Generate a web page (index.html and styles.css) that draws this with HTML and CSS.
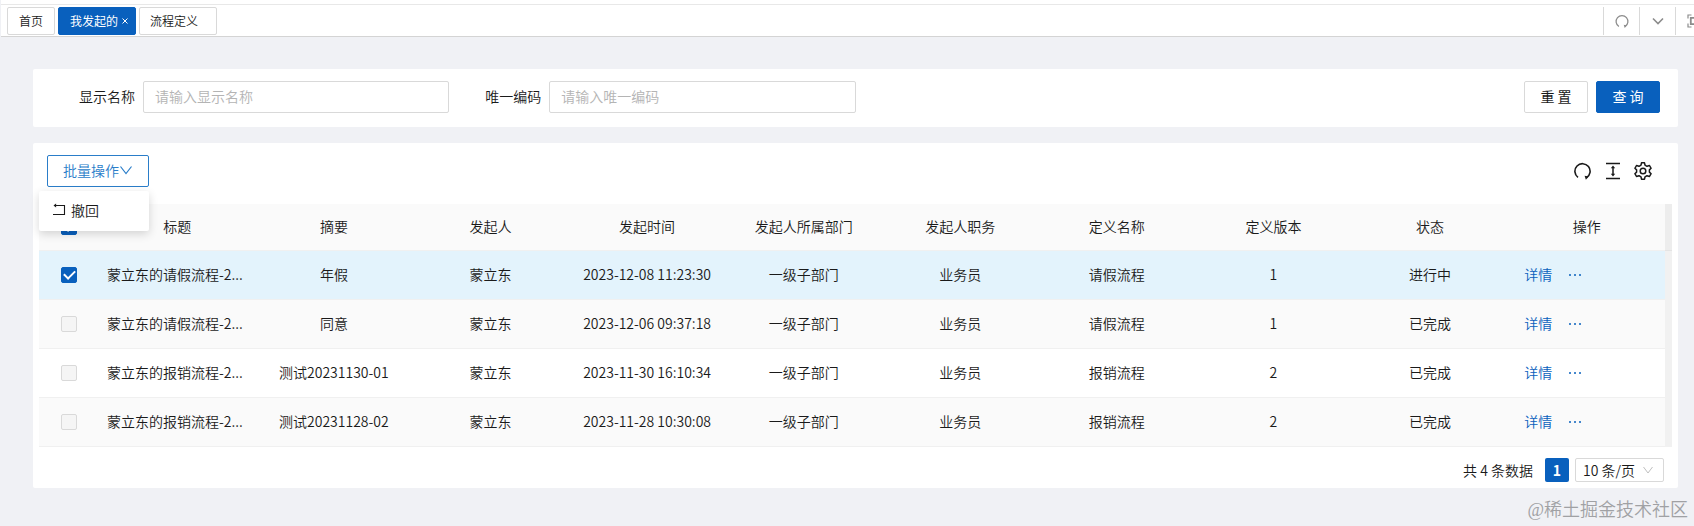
FILE: index.html
```html
<!DOCTYPE html>
<html lang="zh-CN">
<head>
    <meta charset="UTF-8">
    <meta name="viewport" content="width=device-width, initial-scale=1.0">
    <title>我发起的</title>
    <link rel="stylesheet" href="styles.css">
</head>
<body>
    <!-- Page tabs -->
    <header class="tabs-bar">
        <nav class="tabs">
            <a class="tab" href="#">首页</a>
            <div class="tab active">
                <a href="#">我发起的</a>
                <button class="tab-close" type="button" aria-label="关闭">
                    <svg width="6" height="6" viewBox="0 0 6 6" fill="none" stroke="currentColor"><path d="M.5.5l5 5M5.5.5l-5 5"/></svg>
                </button>
            </div>
            <a class="tab tab-wide" href="#">流程定义</a>
        </nav>
        <div class="tab-tools">
            <button type="button" aria-label="刷新">
                <svg width="14" height="14" viewBox="0 0 18 18" fill="none" stroke="currentColor" stroke-width="1.6"><path d="M5 16A7.600 7.600 0 1 1 13 16"/><path d="M11.200 13.900l4 .8-2.700 3.300z" fill="currentColor" stroke="none"/></svg>
            </button>
            <button type="button" aria-label="更多">
                <svg width="12" height="12" viewBox="0 0 12 12" fill="none" stroke="currentColor" stroke-width="1.6"><path d="M1 3.500l5 5 5-5"/></svg>
            </button>
            <button type="button" aria-label="全屏">
                <svg width="14" height="14" viewBox="0 0 14 14" fill="none" stroke="currentColor" stroke-width="1.2"><path d="M1 4.500V1h3.500M9.500 1H13v3.500M13 9.500V13H9.500M4.500 13H1V9.500"/><path d="M3.800 3.800h6.400v6.400H3.800z" stroke-width="1.800"/></svg>
            </button>
        </div>
    </header>

    <main class="content">
        <form class="card search-form">
            <div class="form-item">
                <label for="displayName">显示名称</label>
                <input type="text" id="displayName" placeholder="请输入显示名称">
            </div>
            <div class="form-item">
                <label for="uniqueCode">唯一编码</label>
                <input type="text" id="uniqueCode" placeholder="请输入唯一编码">
            </div>
            <div class="form-actions">
                <button class="btn" type="reset">重 置</button>
                <button class="btn btn-primary" type="button">查 询</button>
            </div>
        </form>

        <section class="card table-card">
            <div class="toolbar">
                <div class="dropdown">
                    <button class="btn btn-outline" type="button">批量操作<svg width="14" height="14" viewBox="0 0 14 14" fill="none" stroke="currentColor" stroke-width="1.2"><path d="M1.500 3.500L7 10.500l5.500-7"/></svg></button>
                    <div class="dropdown-menu">
                        <button type="button">
                            <svg width="14" height="14" viewBox="0 0 14 14" fill="none" stroke="currentColor" stroke-width="1.1"><path d="M2 2.500h9.500v9H0"/><path d="M.5 2.500l2.600-1.900v3.800z" fill="currentColor" stroke="none"/></svg>
                            撤回
                        </button>
                    </div>
                </div>
                <div class="table-tools">
                    <button type="button" aria-label="刷新">
                        <svg width="18" height="18" viewBox="0 0 18 18" fill="none" stroke="currentColor" stroke-width="1.6"><path d="M4 15.400A7.600 7.600 0 1 1 12.400 15.800"/><path d="M10.600 13.700l4 .8-2.700 3.300z" fill="currentColor" stroke="none"/></svg>
                    </button>
                    <button type="button" aria-label="密度">
                        <svg width="18" height="18" viewBox="0 0 18 18" fill="none" stroke="currentColor" stroke-width="1.5"><path d="M2 1.500h14M2 16.500h14M9 5v8"/><path d="M9 3.400l2.200 2.900H6.800zM9 14.600l2.200-2.900H6.800z" fill="currentColor" stroke="none"/></svg>
                    </button>
                    <button type="button" aria-label="列设置">
                        <svg width="18" height="18" viewBox="0 0 18 18" fill="none" stroke="currentColor" stroke-width="1.5" stroke-linejoin="round"><path d="M7.500.8h3l.5 2.300 2 1.200 2.500-.8 1.600 2.800-1.700 1.600v2.200l1.700 1.600-1.600 2.800-2.500-.8-2 1.200-.5 2.300h-3L7 14.900l-2-1.200-2.500.8L.9 11.700l1.700-1.600V7.900L.9 6.300l1.600-2.800 2.500.8 2-1.200z"/><circle cx="9" cy="9" r="2.800"/></svg>
                    </button>
                </div>
            </div>

            <table class="data-table">
                <thead>
                    <tr>
                        <th class="col-check"><input type="checkbox" aria-label="全选" checked></th>
                        <th>标题</th>
                        <th>摘要</th>
                        <th>发起人</th>
                        <th>发起时间</th>
                        <th>发起人所属部门</th>
                        <th>发起人职务</th>
                        <th>定义名称</th>
                        <th>定义版本</th>
                        <th>状态</th>
                        <th>操作</th>
                        <th class="col-scroll"></th>
                    </tr>
                </thead>
                <tbody>
                    <tr class="selected">
                        <td><input type="checkbox" aria-label="选择第1行" checked></td>
                        <td class="title">蒙立东的请假流程-2...</td>
                        <td>年假</td>
                        <td>蒙立东</td>
                        <td>2023-12-08 11:23:30</td>
                        <td>一级子部门</td>
                        <td>业务员</td>
                        <td>请假流程</td>
                        <td>1</td>
                        <td>进行中</td>
                        <td class="actions"><a href="#">详情</a><button type="button" aria-label="更多操作"><svg width="14" height="14" viewBox="0 0 14 14" fill="currentColor"><circle cx="2" cy="7" r="1"/><circle cx="7" cy="7" r="1"/><circle cx="12" cy="7" r="1"/></svg></button></td>
                        <td class="col-scroll"></td>
                    </tr>
                    <tr>
                        <td><input type="checkbox" aria-label="选择第2行" disabled></td>
                        <td class="title">蒙立东的请假流程-2...</td>
                        <td>同意</td>
                        <td>蒙立东</td>
                        <td>2023-12-06 09:37:18</td>
                        <td>一级子部门</td>
                        <td>业务员</td>
                        <td>请假流程</td>
                        <td>1</td>
                        <td>已完成</td>
                        <td class="actions"><a href="#">详情</a><button type="button" aria-label="更多操作"><svg width="14" height="14" viewBox="0 0 14 14" fill="currentColor"><circle cx="2" cy="7" r="1"/><circle cx="7" cy="7" r="1"/><circle cx="12" cy="7" r="1"/></svg></button></td>
                        <td class="col-scroll"></td>
                    </tr>
                    <tr>
                        <td><input type="checkbox" aria-label="选择第3行" disabled></td>
                        <td class="title">蒙立东的报销流程-2...</td>
                        <td>测试20231130-01</td>
                        <td>蒙立东</td>
                        <td>2023-11-30 16:10:34</td>
                        <td>一级子部门</td>
                        <td>业务员</td>
                        <td>报销流程</td>
                        <td>2</td>
                        <td>已完成</td>
                        <td class="actions"><a href="#">详情</a><button type="button" aria-label="更多操作"><svg width="14" height="14" viewBox="0 0 14 14" fill="currentColor"><circle cx="2" cy="7" r="1"/><circle cx="7" cy="7" r="1"/><circle cx="12" cy="7" r="1"/></svg></button></td>
                        <td class="col-scroll"></td>
                    </tr>
                    <tr>
                        <td><input type="checkbox" aria-label="选择第4行" disabled></td>
                        <td class="title">蒙立东的报销流程-2...</td>
                        <td>测试20231128-02</td>
                        <td>蒙立东</td>
                        <td>2023-11-28 10:30:08</td>
                        <td>一级子部门</td>
                        <td>业务员</td>
                        <td>报销流程</td>
                        <td>2</td>
                        <td>已完成</td>
                        <td class="actions"><a href="#">详情</a><button type="button" aria-label="更多操作"><svg width="14" height="14" viewBox="0 0 14 14" fill="currentColor"><circle cx="2" cy="7" r="1"/><circle cx="7" cy="7" r="1"/><circle cx="12" cy="7" r="1"/></svg></button></td>
                        <td class="col-scroll"></td>
                    </tr>
                </tbody>
            </table>

            <div class="pagination">
                <span class="total">共 4 条数据</span>
                <button class="page-num" type="button">1</button>
                <div class="page-size">
                    <select aria-label="每页条数">
                        <option>10 条/页</option>
                        <option>20 条/页</option>
                    </select>
                    <svg width="12" height="12" viewBox="0 0 12 12" fill="none" stroke="currentColor"><path d="M1.500 3L6 9l4.500-6"/></svg>
                </div>
            </div>
        </section>
    </main>

    <div class="watermark">@稀土掘金技术社区</div>
</body>
</html>
```

FILE: styles.css
```css
* {
    box-sizing: border-box;
}

body {
    margin: 0;
    min-height: 100vh;
    position: relative;
    background-color: #f0f1f5;
    color: #1a1a1a;
    font-family: "Noto Sans CJK SC", sans-serif;
    font-size: 14px;
    font-weight: 350;
    line-height: 22px;
    overflow-x: hidden;
}

a {
    color: inherit;
    text-decoration: none;
}

button, input, select {
    font: inherit;
    color: inherit;
}

button {
    padding: 0;
    border: none;
    background: none;
    cursor: pointer;
}

svg {
    display: block;
    flex: none;
}

/* Tabs bar */
.tabs-bar {
    display: flex;
    justify-content: space-between;
    margin-top: 4px;
    margin-left: 1px;
    padding-top: 2px;
    background-color: white;
    border-top: 1px solid #e8e8e8;
    border-bottom: 1px solid #d4d4d4;
    box-shadow: 0 -4px 0 white;
}

.tabs {
    display: flex;
    gap: 3px;
    padding: 0 0 1px 6px;
}

.tab {
    display: flex;
    align-items: center;
    gap: 4px;
    height: 28px;
    padding: 0 11px;
    border: 1px solid #d9d9d9;
    border-radius: 2px;
    background-color: white;
    font-size: 12px;
}

.tab.active {
    padding: 0 7px 0 11px;
    background-color: #0960bd;
    border-color: #0960bd;
    color: white;
    font-weight: 400;
}

.tab.tab-wide {
    padding: 0 18px 0 10px;
}

.tab-tools {
    display: flex;
    margin-right: -17px;
    padding-bottom: 1px;
    color: #8c8c8c;
}

.tab-tools button {
    display: flex;
    align-items: center;
    justify-content: center;
    width: 36px;
    border-left: 1px solid #d9d9d9;
}

/* Cards */
.content {
    display: flex;
    flex-direction: column;
    gap: 16px;
    padding: 32px 16px 38px 33px;
}

.card {
    background-color: white;
    border-radius: 2px;
}

.search-form {
    display: grid;
    grid-template-columns: repeat(4, 1fr);
    padding: 12px 10px 14px;
}

.form-item {
    display: flex;
    align-items: center;
}

.form-item label {
    width: 100px;
    padding: 0 8px 2px 0;
    text-align: right;
}

.form-item input {
    flex: 1;
    min-width: 0;
    height: 32px;
    padding: 0 11px 2px;
    border: 1px solid #d9d9d9;
    border-radius: 2px;
}

.form-item input::placeholder {
    color: #b4b4b4;
}

.form-actions {
    grid-column: span 2;
    display: flex;
    justify-content: flex-end;
    gap: 8px;
    padding-right: 8px;
}

.btn {
    display: flex;
    align-items: center;
    height: 32px;
    padding: 0 15px;
    border: 1px solid #d9d9d9;
    border-radius: 2px;
    background-color: white;
}

.form-actions .btn {
    justify-content: center;
    width: 64px;
    padding: 0 0 2px;
    font-weight: 400;
}

.form-actions .btn-primary {
    background-color: #0960bd;
    border-color: #0960bd;
    color: white;
}

.btn-outline {
    padding-bottom: 2px;
    border-color: #2a7dc9;
    color: #2a7dc9;
}

/* Table */
.table-card {
    padding: 12px 6px 6px;
}

.toolbar {
    display: flex;
    justify-content: space-between;
    padding: 0 20px 17px 8px;
}

.dropdown {
    position: relative;
}

.dropdown-menu {
    position: absolute;
    top: 36px;
    right: 0;
    width: 110px;
    padding: 4px 0;
    background-color: white;
    border-radius: 2px;
    box-shadow: 0 3px 10px rgba(0, 0, 0, 0.16);
    z-index: 1;
}

.dropdown-menu button {
    display: flex;
    align-items: center;
    gap: 4px;
    width: 100%;
    height: 32px;
    padding: 0 14px 2px;
}

.table-tools {
    display: flex;
    align-items: center;
    gap: 12px;
}

.data-table {
    width: 100%;
    table-layout: fixed;
    border-collapse: separate;
    border-spacing: 0;
    text-align: center;
}

.data-table th,
.data-table td {
    height: 49px;
    padding: 0 8px 2px;
    border-bottom: 1px solid #f0f0f0;
    white-space: nowrap;
}

.data-table th {
    height: 47px;
    background-color: #fafafa;
    font-weight: inherit;
}

.data-table th:first-child,
.data-table td:first-child {
    padding-bottom: 0;
}

.data-table tr:nth-child(even) td {
    background-color: #fafafa;
}

.data-table .selected td {
    background-color: #e3f3fc;
}

.data-table .col-check {
    width: 60px;
}

.data-table .title {
    text-align: left;
}

.data-table th.col-scroll {
    width: 7px;
    padding: 0;
    background-color: #ededed;
    border-color: #e4e4e4;
}

.data-table td.col-scroll,
.data-table tr:nth-child(even) td.col-scroll {
    padding: 0;
    background-color: #f1f1f1;
    border-color: #f1f1f1;
}

.data-table input {
    appearance: none;
    display: block;
    width: 16px;
    height: 16px;
    margin: 0 auto;
    border: 1px solid #d9d9d9;
    border-radius: 2px;
    background-color: #f5f5f5;
}

.data-table input:checked {
    display: grid;
    place-items: center;
    background-color: #0960bd;
    border-color: #0960bd;
}

.data-table input:checked::after {
    content: "";
    width: 5px;
    height: 9px;
    margin-bottom: 3px;
    border: solid white;
    border-width: 0 2px 2px 0;
    transform: rotate(45deg);
}

.data-table .actions {
    padding-left: 16px;
    color: #0960bd;
    text-align: left;
}

.actions button {
    margin-left: 16px;
    vertical-align: -2px;
}

/* Pagination */
.pagination {
    display: flex;
    align-items: center;
    justify-content: flex-end;
    padding: 11px 8px 0 0;
}

.page-num {
    width: 24px;
    height: 24px;
    margin: 0 6px 0 12px;
    border-radius: 2px;
    background-color: #0960bd;
    color: white;
    font-weight: bold;
}

.page-size {
    position: relative;
    width: 89px;
}

.page-size select {
    appearance: none;
    display: block;
    width: 100%;
    height: 24px;
    padding: 0 7px;
    border: 1px solid #d9d9d9;
    border-radius: 2px;
    background-color: white;
}

.page-size svg {
    position: absolute;
    top: 6px;
    right: 10px;
    color: #bfbfbf;
    pointer-events: none;
}

.watermark {
    position: absolute;
    right: 6px;
    bottom: 4px;
    color: #a0a1a4;
    font-family: "Liberation Serif", "Noto Sans CJK SC", serif;
    font-size: 18px;
    line-height: 24px;
}
```
